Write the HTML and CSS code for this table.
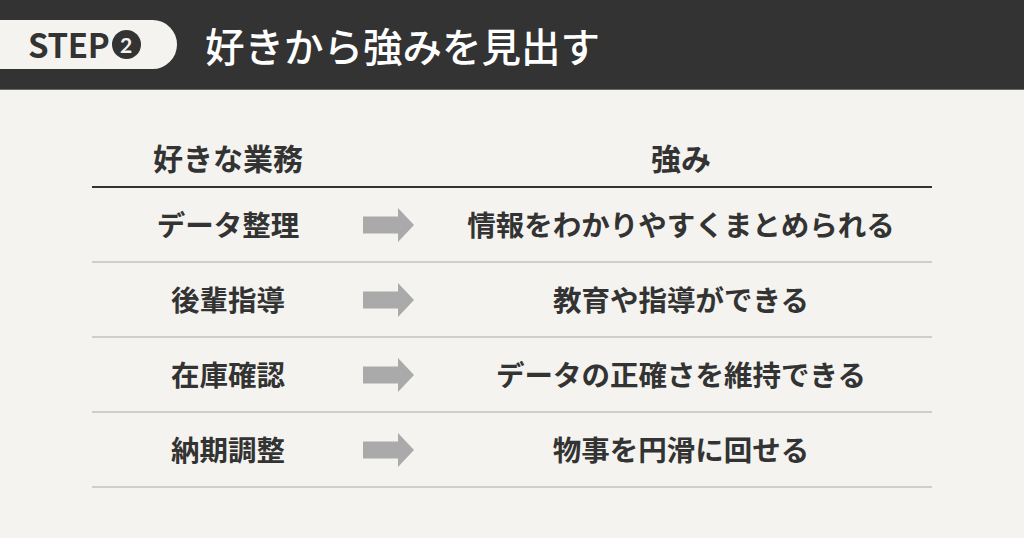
FILE: index.html
```html
<!DOCTYPE html>
<html lang="ja">
<head>
<meta charset="utf-8">
<link rel="stylesheet" href="styles.css">
</head>
<body>
<header class="banner">
  <div class="step-pill"><span class="step-word">STEP</span><span class="step-num">2</span></div>
  <h1 class="title">好きから強みを見出す</h1>
</header>
<main class="content">
  <div class="table">
    <div class="row head">
      <div class="cell left">好きな業務</div>
      <div class="cell mid"></div>
      <div class="cell right">強み</div>
    </div>
    <div class="row">
      <div class="cell left">データ整理</div>
      <div class="cell mid"><svg class="arrow" viewBox="0 0 51 34"><path d="M0 8.5H35V0L51 17L35 34V25.5H0Z"/></svg></div>
      <div class="cell right">情報をわかりやすくまとめられる</div>
    </div>
    <div class="row">
      <div class="cell left">後輩指導</div>
      <div class="cell mid"><svg class="arrow" viewBox="0 0 51 34"><path d="M0 8.5H35V0L51 17L35 34V25.5H0Z"/></svg></div>
      <div class="cell right">教育や指導ができる</div>
    </div>
    <div class="row">
      <div class="cell left">在庫確認</div>
      <div class="cell mid"><svg class="arrow" viewBox="0 0 51 34"><path d="M0 8.5H35V0L51 17L35 34V25.5H0Z"/></svg></div>
      <div class="cell right">データの正確さを維持できる</div>
    </div>
    <div class="row">
      <div class="cell left">納期調整</div>
      <div class="cell mid"><svg class="arrow" viewBox="0 0 51 34"><path d="M0 8.5H35V0L51 17L35 34V25.5H0Z"/></svg></div>
      <div class="cell right">物事を円滑に回せる</div>
    </div>
  </div>
</main>
</body>
</html>
```
FILE: styles.css
```css
html, body {
  margin: 0;
  padding: 0;
}
body {
  width: 1024px;
  height: 538px;
  overflow: hidden;
  background: #f4f3ef;
  color: #333333;
  font-family: "Noto Sans CJK JP", "Noto Sans", sans-serif;
}
.banner {
  height: 89px;
  background: #333333;
  display: flex;
  align-items: center;
  border-bottom: 1px solid #6a6a68;
}
.step-pill {
  flex: none;
  width: 177px;
  height: 49px;
  margin-top: -1px;
  background: #f4f3ef;
  border-radius: 0 25px 25px 0;
  display: flex;
  align-items: center;
  padding-left: 28px;
  box-sizing: border-box;
}
.step-word {
  font-size: 33px;
  font-weight: 700;
  letter-spacing: -0.3px;
  line-height: 1;
  color: #333333;
}
.step-num {
  flex: none;
  display: block;
  width: 29px;
  height: 29px;
  border-radius: 50%;
  background: #333333;
  color: #f4f3ef;
  font-family: "Lato", "Noto Sans", sans-serif;
  font-size: 21px;
  font-weight: 700;
  line-height: 29px;
  text-align: center;
  margin-left: 2px;
  margin-top: 1px;
}
.title {
  margin: 0 0 0 28px;
  color: #ffffff;
  font-size: 39.5px;
  font-weight: 500;
  line-height: 1;
  letter-spacing: 0;
}
.content {
  padding: 37px 92px 0 92px;
}
.table {
  width: 840px;
}
.row {
  display: grid;
  grid-template-columns: 272px 66px 1fr;
  align-items: center;
  height: 73px;
  border-bottom: 2px solid #d0cec9;
}
.row.head {
  height: 59px;
  border-bottom: 2px solid #333333;
}
.cell {
  font-size: 28.5px;
  font-weight: 700;
  line-height: 1;
  text-align: center;
  white-space: nowrap;
}
.row.head .cell {
  font-size: 30px;
}
.mid {
  display: flex;
  justify-content: flex-start;
}
.arrow {
  width: 51px;
  height: 34px;
  fill: #aaaaaa;
  display: block;
  margin-left: -1px;
}
```
